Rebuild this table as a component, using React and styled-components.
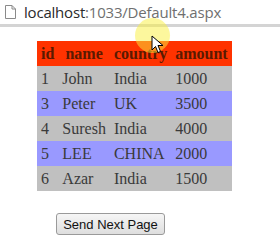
import React from "react";
import styled, { createGlobalStyle } from "styled-components";

const Global = createGlobalStyle`
  html, body { margin: 0; padding: 0; background: #fff; }
  body { width: 280px; height: 240px; overflow: hidden; position: relative; }
`;

const Page = styled.div`
  width: 280px;
  height: 240px;
  display: flex;
  flex-direction: column;
  position: relative;
`;

const AddressBar = styled.div`
  height: 24px;
  display: flex;
  align-items: center;
  gap: 8px;
  padding-left: 5px;
  border-bottom: 3px solid #d4d4d4;
  font-family: "Open Sans", "Noto Sans", sans-serif;
  font-size: 15px;
  letter-spacing: -0.2px;
`;

const Host = styled.span`
  color: #2a2a2a;
`;

const Path = styled.span`
  color: #6f6f6f;
`;

const Content = styled.div`
  padding: 14px 0 0 37px;
  display: flex;
  flex-direction: column;
  align-items: flex-start;
`;

const Table = styled.table`
  border-collapse: collapse;
  font-family: "Liberation Serif", serif;
  font-size: 16px;
`;

const Row = styled.tr`
  background: ${(p) => p.$bg};
  height: 25px;
`;

const Th = styled.th`
  color: #5a1a00;
  font-weight: bold;
  padding: 0 4px;
  text-align: center;
`;

const Td = styled.td`
  color: #3a3a3a;
  padding: 0 4px;
  text-align: left;
`;

const Button = styled.button`
  margin: 22px 0 0 19px;
  width: 109px;
  height: 22px;
  font-family: "Liberation Sans", Arial, sans-serif;
  font-size: 13px;
  color: #111;
  background: linear-gradient(#f6f6f6, #dedede);
  border: 1px solid #9a9a9a;
  border-radius: 3px;
  padding: 0;
`;

const Highlight = styled.div`
  position: absolute;
  left: 135px;
  top: 18px;
  width: 35px;
  height: 35px;
  border-radius: 50%;
  background: rgba(250, 240, 60, 0.5);
  pointer-events: none;
`;

const Cursor = styled.svg`
  position: absolute;
  left: 151px;
  top: 35px;
`;

const DocIcon = () => (
  <svg width="11" height="14" viewBox="0 0 11 14">
    <path d="M0.5 0.5H7L10.5 4V13.5H0.5Z" fill="#fff" stroke="#8a8a8a" />
    <path d="M7 0.5V4H10.5" fill="none" stroke="#8a8a8a" />
  </svg>
);

const rows = [
  ["1", "John", "India", "1000"],
  ["3", "Peter", "UK", "3500"],
  ["4", "Suresh", "India", "4000"],
  ["5", "LEE", "CHINA", "2000"],
  ["6", "Azar", "India", "1500"],
];

export default function App() {
  return (
    <Page>
      <Global />
      <AddressBar>
        <DocIcon />
        <span>
          <Host>localhost</Host>
          <Path>:1033/Default4.aspx</Path>
        </span>
      </AddressBar>
      <Content>
        <Table>
          <thead>
            <Row $bg="#ff3300">
              <Th>id</Th>
              <Th>name</Th>
              <Th>country</Th>
              <Th>amount</Th>
            </Row>
          </thead>
          <tbody>
            {rows.map((r, i) => (
              <Row key={r[0]} $bg={i % 2 === 0 ? "#c0c0c0" : "#9999ff"}>
                {r.map((c, j) => (
                  <Td key={j}>{c}</Td>
                ))}
              </Row>
            ))}
          </tbody>
        </Table>
        <Button>Send Next Page</Button>
      </Content>
      <Highlight />
      <Cursor width="14" height="20" viewBox="0 0 14 20">
        <path d="M1 1V15L4.5 11.5L7 17.5L9.5 16.5L7 10.5H12Z" fill="#fff" stroke="#000" strokeWidth="1" strokeLinejoin="round" />
      </Cursor>
    </Page>
  );
}
